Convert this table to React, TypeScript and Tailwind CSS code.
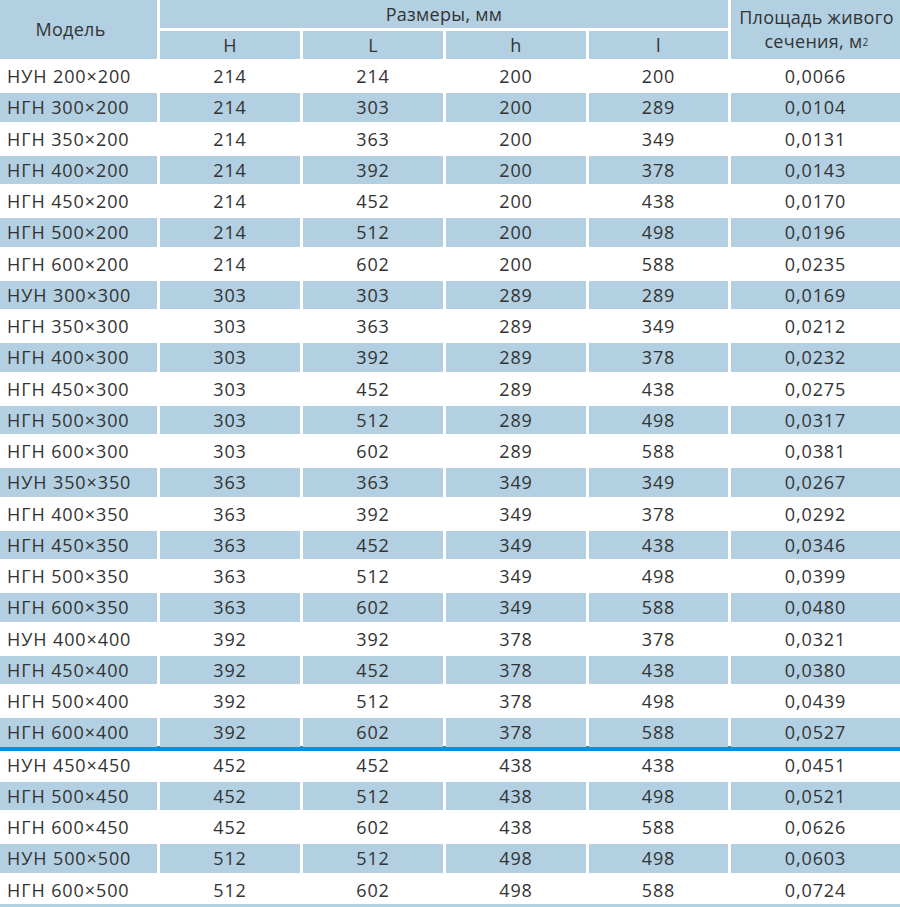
import React from "react";

type Row = [string, number, number, number, number, string];

const top: Row[] = [
  ["НУН 200×200", 214, 214, 200, 200, "0,0066"],
  ["НГН 300×200", 214, 303, 200, 289, "0,0104"],
  ["НГН 350×200", 214, 363, 200, 349, "0,0131"],
  ["НГН 400×200", 214, 392, 200, 378, "0,0143"],
  ["НГН 450×200", 214, 452, 200, 438, "0,0170"],
  ["НГН 500×200", 214, 512, 200, 498, "0,0196"],
  ["НГН 600×200", 214, 602, 200, 588, "0,0235"],
  ["НУН 300×300", 303, 303, 289, 289, "0,0169"],
  ["НГН 350×300", 303, 363, 289, 349, "0,0212"],
  ["НГН 400×300", 303, 392, 289, 378, "0,0232"],
  ["НГН 450×300", 303, 452, 289, 438, "0,0275"],
  ["НГН 500×300", 303, 512, 289, 498, "0,0317"],
  ["НГН 600×300", 303, 602, 289, 588, "0,0381"],
  ["НУН 350×350", 363, 363, 349, 349, "0,0267"],
  ["НГН 400×350", 363, 392, 349, 378, "0,0292"],
  ["НГН 450×350", 363, 452, 349, 438, "0,0346"],
  ["НГН 500×350", 363, 512, 349, 498, "0,0399"],
  ["НГН 600×350", 363, 602, 349, 588, "0,0480"],
  ["НУН 400×400", 392, 392, 378, 378, "0,0321"],
  ["НГН 450×400", 392, 452, 378, 438, "0,0380"],
  ["НГН 500×400", 392, 512, 378, 498, "0,0439"],
  ["НГН 600×400", 392, 602, 378, 588, "0,0527"],
];

const bottom: Row[] = [
  ["НУН 450×450", 452, 452, 438, 438, "0,0451"],
  ["НГН 500×450", 452, 512, 438, 498, "0,0521"],
  ["НГН 600×450", 452, 602, 438, 588, "0,0626"],
  ["НУН 500×500", 512, 512, 498, 498, "0,0603"],
  ["НГН 600×500", 512, 602, 498, 588, "0,0724"],
];

const cols = "grid grid-cols-[157px_140px_140px_140px_139px_169px] gap-x-[3px]";

function DataRow({ row, shaded }: { row: Row; shaded: boolean }) {
  const cell = `h-[28.25px] flex items-center ${shaded ? "bg-[#b2d0e1]" : ""}`;
  return (
    <div className={`${cols} mb-[3px]`}>
      <div className={`${cell} pl-[7px]`}>{row[0]}</div>
      {row.slice(1).map((v, i) => (
        <div key={i} className={`${cell} justify-center`}>
          {v}
        </div>
      ))}
    </div>
  );
}

export default function App() {
  return (
    <div
      className="w-[900px] h-[907px] bg-white text-[#333333] text-[18px] tracking-[0.9px] leading-none overflow-hidden"
      style={{ fontFamily: '"Open Sans", "Liberation Sans", sans-serif' }}
    >
      {/* header */}
      <div className={`${cols} grid-rows-[28px_28px] gap-y-[3px] mb-[3px] tracking-[0.3px]`}>
        <div className="row-span-2 bg-[#b2d0e1] flex items-center justify-center pb-[2px] pr-[16px]">Модель</div>
        <div className="col-span-4 bg-[#b2d0e1] flex items-center justify-center">Размеры, мм</div>
        <div className="row-span-2 bg-[#b2d0e1] flex flex-col items-center justify-center leading-[24px] pb-[2px] pl-[2px]">
          <span>Площадь живого</span>
          <span>
            сечения, м<sup className="text-[10px] relative -top-[2px]">2</sup>
          </span>
        </div>
        <div className="bg-[#b2d0e1] flex items-center justify-center">H</div>
        <div className="bg-[#b2d0e1] flex items-center justify-center">L</div>
        <div className="bg-[#b2d0e1] flex items-center justify-center">h</div>
        <div className="bg-[#b2d0e1] flex items-center justify-center">l</div>
      </div>

      {top.map((r, i) => (
        <DataRow key={r[0]} row={r} shaded={i % 2 === 1} />
      ))}
      <div className="h-[5px] bg-[#0a8fdb] -mt-[4px]" />
      {bottom.map((r, i) => (
        <DataRow key={r[0]} row={r} shaded={i % 2 === 1} />
      ))}
      <div className="h-[3px] bg-[#b2d0e1] -mt-[3px]" />
    </div>
  );
}
